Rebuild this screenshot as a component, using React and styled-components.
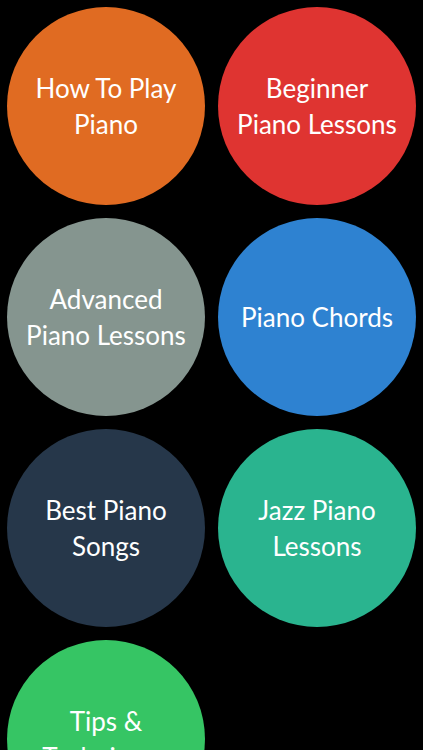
import styled, { createGlobalStyle } from "styled-components";

const GlobalStyle = createGlobalStyle`
  html, body {
    margin: 0;
    padding: 0;
    background: #000;
  }
  body {
    font-family: "Lato", "Open Sans", sans-serif;
  }
`;

const lessons = [
  { lines: ["How To Play", "Piano"], color: "#e06b22" },
  { lines: ["Beginner", "Piano Lessons"], color: "#df3431" },
  { lines: ["Advanced", "Piano Lessons"], color: "#85958f" },
  { lines: ["Piano Chords"], color: "#2e82d1" },
  { lines: ["Best Piano", "Songs"], color: "#26374a" },
  { lines: ["Jazz Piano", "Lessons"], color: "#2ab48f" },
  { lines: ["Tips &", "Techniques"], color: "#36c564" },
];

const Grid = styled.div`
  display: grid;
  grid-template-columns: repeat(2, 198px);
  gap: 13px;
  padding: 7px;
  background: #000;
  min-height: 100vh;
  box-sizing: border-box;
`;

const Circle = styled.button`
  width: 198px;
  height: 198px;
  border-radius: 50%;
  border: none;
  padding: 0;
  background: ${(p) => p.$color};
  color: #fff;
  display: flex;
  flex-direction: column;
  align-items: center;
  justify-content: center;
  font-family: "Lato", "Open Sans", sans-serif;
  font-size: 26px;
  line-height: 36px;
  font-weight: 400;
  cursor: pointer;
`;

const Line = styled.span`
  display: block;
  white-space: nowrap;
`;

export default function App() {
  return (
    <>
      <GlobalStyle />
      <Grid>
        {lessons.map((l) => (
          <Circle key={l.lines.join(" ")} $color={l.color}>
            {l.lines.map((t) => (
              <Line key={t}>{t}</Line>
            ))}
          </Circle>
        ))}
      </Grid>
    </>
  );
}
